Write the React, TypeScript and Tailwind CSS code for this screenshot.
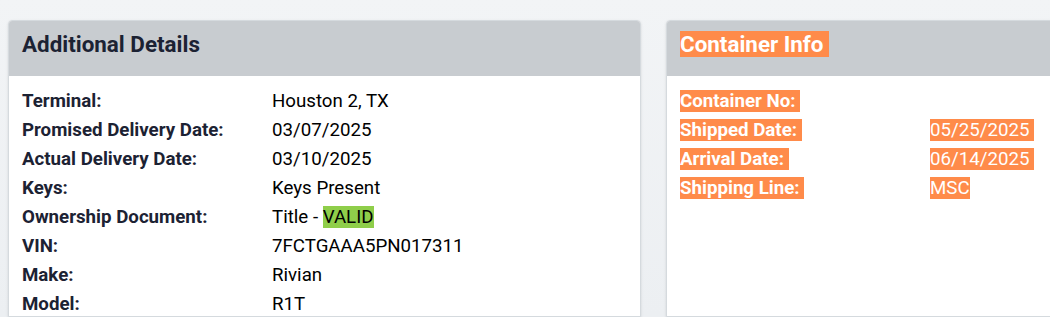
const DETAILS: [string, React.ReactNode][] = [
  ["Terminal:", "Houston 2, TX"],
  ["Promised Delivery Date:", "03/07/2025"],
  ["Actual Delivery Date:", "03/10/2025"],
  ["Keys:", "Keys Present"],
  [
    "Ownership Document:",
    <>
      Title - <span className="bg-[#8fce4a]">VALID</span>
    </>,
  ],
  ["VIN:", "7FCTGAAA5PN017311"],
  ["Make:", "Rivian"],
  ["Model:", "R1T"],
];

const CONTAINER: [string, string][] = [
  ["Container No: ", ""],
  ["Shipped Date: ", "05/25/2025 "],
  ["Arrival Date: ", "06/14/2025 "],
  ["Shipping Line: ", "MSC"],
];

const hl = "bg-[#ff8b4a] text-white whitespace-pre";

export default function App() {
  return (
    <div
      className="flex h-[317px] w-[1050px] gap-[25px] overflow-hidden bg-gradient-to-b from-[#f2f4f6] to-[#eceff2] pl-2 pt-5"
      style={{ fontFamily: "Roboto, 'Liberation Sans', sans-serif" }}
    >
      {/* Additional Details */}
      <div className="w-[633px] shrink-0 overflow-hidden rounded-t border border-[#d5dade] bg-white shadow-sm">
        <div className="h-[55px] bg-[#c8ccd0] px-[13px] pt-[10px]">
          <h2 className="text-[22.4px] leading-[27px] font-bold text-[#1c2233]">Additional Details</h2>
        </div>
        <div className="grid grid-cols-[250px_1fr] px-[13px] pt-[10.5px] text-[18.7px] leading-[29px]">
          {DETAILS.map(([label, value]) => (
            <div key={label} className="contents">
              <div className="font-bold text-[#1c2233]">{label}</div>
              <div className="text-black">{value}</div>
            </div>
          ))}
        </div>
      </div>

      {/* Container Info */}
      <div className="w-[633px] shrink-0 overflow-hidden rounded-t border border-[#d5dade] bg-white shadow-sm">
        <div className="h-[55px] bg-[#c8ccd0] px-[13px] pt-[10px]">
          <h2 className="text-[22.4px] leading-[27px] font-bold">
            <span className={hl}>Container Info </span>
          </h2>
        </div>
        <div className="grid grid-cols-[250px_1fr] px-[13px] pt-[10.5px] text-[18.7px] leading-[29px]">
          {CONTAINER.map(([label, value]) => (
            <div key={label} className="contents">
              <div className="font-bold">
                <span className={hl}>{label}</span>
              </div>
              <div>{value && <span className={hl}>{value}</span>}</div>
            </div>
          ))}
        </div>
      </div>
    </div>
  );
}
